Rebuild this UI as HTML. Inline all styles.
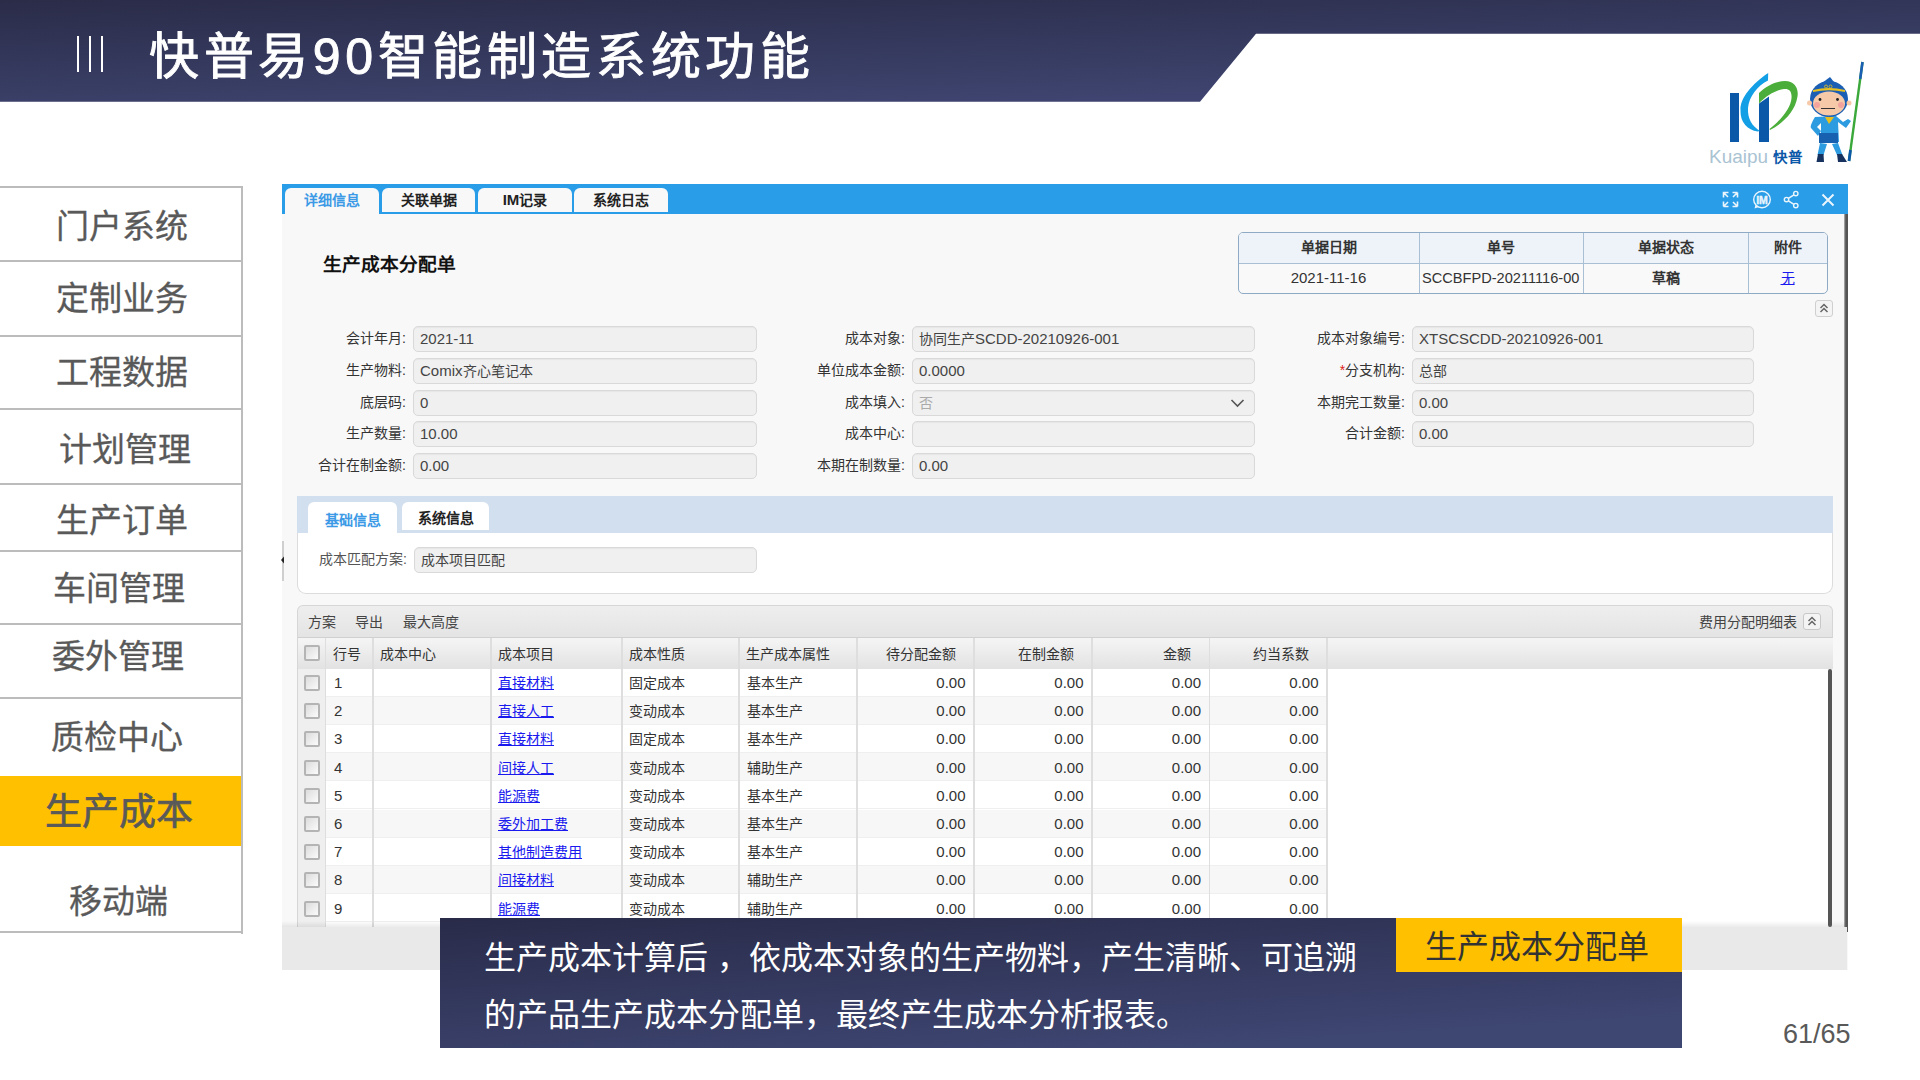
<!DOCTYPE html>
<html lang="zh-CN">
<head>
<meta charset="utf-8">
<style>
*{box-sizing:border-box;margin:0;padding:0}
html,body{width:1920px;height:1080px;overflow:hidden;background:#fff}
body{position:relative;font-family:"Liberation Sans",sans-serif}
.abs{position:absolute}
#hdr{left:0;top:0;width:1920px;height:102px}
.bar{position:absolute;top:36px;width:2px;height:36px;background:#fff}
#title{left:149px;top:25px;color:#fff;font-size:50px;font-weight:400;letter-spacing:4.6px;-webkit-text-stroke:0.9px #fff;line-height:64px;white-space:nowrap}
/* nav */
.nav{position:absolute;left:0;width:243px;border-right:2px solid #bcbcbc;color:#595959;font-size:32px;white-space:nowrap}
.nl{position:absolute;left:0;width:243px;height:2px;background:#bcbcbc}
.nt{position:absolute;line-height:40px;white-space:nowrap;color:#595959;font-size:33px;-webkit-text-stroke:0.3px #595959}
/* screenshot */
.tab{position:absolute;background:#f8f8f8;border-radius:6px 6px 0 0;font-size:14px;font-weight:bold;text-align:center;line-height:24px;color:#222;white-space:nowrap}
.tt{position:absolute;font-size:14px;line-height:18px;text-align:center;white-space:nowrap}
.lab{position:absolute;font-size:14px;line-height:25px;text-align:right;color:#333;white-space:nowrap}
.inp{position:absolute;height:26px;border:1px solid #d9d9d9;border-radius:5px;background:#f0f0f0;font-size:14px;line-height:24px;padding-left:6px;color:#444;white-space:nowrap;box-shadow:inset 0 1px 1px rgba(0,0,0,0.04)}
.tab2{position:absolute;background:#fff;border-radius:6px 6px 0 0;font-size:14px;font-weight:bold;text-align:center;line-height:28px;white-space:nowrap}
.gt{position:absolute;font-size:14px;line-height:18px;color:#444;white-space:nowrap}
.gd{position:absolute;font-size:14px;line-height:16px;color:#333;white-space:nowrap}
.en{font-size:15px}
.lk{color:#1a1aee;text-decoration:underline}
.cb{position:absolute;width:16px;height:16px;border:2px solid #b4b4b4;border-radius:2px;background:linear-gradient(135deg,#dcdcdc,#fbfbfb)}
</style>
</head>
<body>
<svg id="hdr" class="abs" width="1920" height="102" viewBox="0 0 1920 102">
<defs><linearGradient id="hg" x1="0" y1="0" x2="0.5" y2="1"><stop offset="0" stop-color="#2a2c48"/><stop offset="1" stop-color="#3e446f"/></linearGradient></defs>
<polygon points="0,0 1920,0 1920,33.7 1256,33.7 1200,101.7 0,101.7" fill="url(#hg)"/>
</svg>
<div class="bar" style="left:77px"></div>
<div class="bar" style="left:89px"></div>
<div class="bar" style="left:101px"></div>
<div id="title" class="abs">快普易90智能制造系统功能</div>

<!-- LOGO -->
<svg class="abs" style="left:1700px;top:55px" width="170" height="115" viewBox="1700 55 170 115">
<rect x="1730" y="93" width="9" height="49" fill="#0b58a8"/>
<path d="M1759 103.5 L1769 96.5 L1769 142 L1759 142 Z" fill="#0b58a8"/>
<path d="M1768.2 73 C1752 84 1740 98 1740.5 110 C1740 123 1748 130 1757.5 131.5 L1760 131 C1752 126 1747.5 119 1748 108 C1749 97 1757 86 1768 80.5 Z" fill="#129fe6"/>
<path d="M1759 93 C1766 86 1776 81 1785 81 C1795 81 1799 89 1797.4 97 C1795 112 1782 124 1770 130 L1769.5 129 C1780 121 1791 108 1791.5 98 C1792 91 1789 88.5 1784 89 C1776 90 1766 96 1759 103.5 Z" fill="#4cae3a"/>
<text x="1709" y="163" font-family="Liberation Sans" font-size="18.5" fill="#aac3d3" textLength="59" lengthAdjust="spacingAndGlyphs">Kuaipu</text>
<text x="1773" y="162" font-family="Liberation Sans" font-size="14" font-weight="bold" fill="#0b58a8" textLength="29" lengthAdjust="spacingAndGlyphs">快普</text>
<!-- stick -->
<path d="M1862.5 62 L1849 161" stroke="#3aa83a" stroke-width="2.4"/>
<path d="M1862.5 62 L1860.2 79" stroke="#1a5fb4" stroke-width="2.6"/>
<path d="M1850.5 150 L1849 161" stroke="#0b58a8" stroke-width="2.8"/>
<!-- monkey body -->
<path d="M1815 117 C1812 122 1810 126 1811 128 L1818 136 L1821 131 L1817 127 L1821 123 L1821 142 L1839 142 L1838 122 L1846 128 L1851 121 L1848 119 L1843 122 L1836 116 Z" fill="#2d9be0"/>
<rect x="1819" y="133" width="19" height="10" fill="#1860b0"/>
<path d="M1820 143 L1817.5 155 L1823.5 155 L1827 144 Z M1832 144 L1837 155 L1842.5 155 L1838 143 Z" fill="#2d9be0"/>
<path d="M1818 154 L1816.5 162 L1824 162 L1823.5 154 Z M1837 154 L1838 162 L1847 162 L1842 154 Z" fill="#17325e"/>
<!-- head -->
<path d="M1822 83 L1830 77 L1834 82 Z" fill="#1a5fb4"/>
<ellipse cx="1829" cy="99" rx="19" ry="18" fill="#1a5fb4"/>
<circle cx="1809.5" cy="103" r="2.5" fill="#f6c9a9"/>
<circle cx="1849" cy="103" r="2.5" fill="#f6c9a9"/>
<ellipse cx="1829" cy="103.5" rx="16" ry="12" fill="#f6c9a9"/>
<path d="M1813 90 Q1829 86 1845 90 L1845 92 Q1829 88.5 1813 92 Z" fill="#e8c020"/>
<circle cx="1826" cy="86.5" r="1.5" fill="none" stroke="#e8c020" stroke-width="0.8"/>
<circle cx="1830.5" cy="86.5" r="1.5" fill="none" stroke="#e8c020" stroke-width="0.8"/>
<circle cx="1820" cy="99.5" r="1.4" fill="#222"/>
<circle cx="1837.5" cy="99.5" r="1.4" fill="#222"/>
<rect x="1821" y="108" width="14" height="1" fill="#333"/>
<circle cx="1817" cy="105" r="3" fill="#f19a9a" opacity="0.8"/>
<circle cx="1841" cy="105" r="3" fill="#f19a9a" opacity="0.8"/>
<path d="M1825 117 L1829 124 L1834 117 Z" fill="#e8c020"/>
</svg>

<!-- NAV -->
<div class="nl" style="top:186px"></div>
<div class="nl" style="top:260px"></div>
<div class="nl" style="top:335px"></div>
<div class="nl" style="top:408px"></div>
<div class="nl" style="top:483px"></div>
<div class="nl" style="top:550px"></div>
<div class="nl" style="top:623px"></div>
<div class="nl" style="top:697px"></div>
<div class="nl" style="top:931px"></div>
<div class="abs" style="left:241px;top:186px;width:2px;height:748px;background:#bcbcbc"></div>
<div class="abs" style="left:0;top:776px;width:241px;height:70px;background:#ffc000"></div>
<div class="nt" style="left:56px;top:206.5px">门户系统</div>
<div class="nt" style="left:56px;top:278.5px">定制业务</div>
<div class="nt" style="left:56px;top:352.5px">工程数据</div>
<div class="nt" style="left:59px;top:429.5px">计划管理</div>
<div class="nt" style="left:56px;top:500.5px">生产订单</div>
<div class="nt" style="left:53px;top:568.5px">车间管理</div>
<div class="nt" style="left:52px;top:636.5px">委外管理</div>
<div class="nt" style="left:51px;top:717.5px">质检中心</div>
<div class="nt" style="left:45px;top:793px;font-size:37px;-webkit-text-stroke:0.7px #595959">生产成本</div>
<div class="nt" style="left:69px;top:881.5px">移动端</div>

<div class="abs" style="left:282px;top:184px;width:1566px;height:786px;background:#f8f8f8"></div>
<div class="abs" style="left:282px;top:184px;width:1566px;height:30px;background:#2a9de8"></div>
<div class="tab" style="left:285px;top:188px;width:94px;height:26px;color:#3d9ae6">详细信息</div>
<div class="tab" style="left:382px;top:188px;width:93px;height:24px">关联单据</div>
<div class="tab" style="left:478px;top:188px;width:94px;height:24px"><span class="en">IM</span>记录</div>
<div class="tab" style="left:574px;top:188px;width:94px;height:24px">系统日志</div>
<div class="abs" style="left:1844px;top:214px;width:4px;height:718px;background:linear-gradient(90deg,#bbb,#555 45%,#555)"></div>
<div class="abs" style="left:282px;top:927px;width:1565px;height:43px;background:#e9e9e9"></div>
<div class="abs" style="left:323px;top:251.5px;font-size:18.7px;font-weight:bold;color:#111;line-height:26px;white-space:nowrap">生产成本分配单</div>
<div class="abs" style="left:1238px;top:232px;width:590px;height:62px;border:1px solid #8eaac4;border-radius:5px;background:#f9f9f9;overflow:hidden"><div class="abs" style="left:0;top:0;width:590px;height:31px;background:#eef3f9;border-bottom:1px solid #a9bfd3"></div><div class="abs" style="left:180px;top:0;width:1px;height:62px;background:#a9bfd3"></div><div class="abs" style="left:344px;top:0;width:1px;height:62px;background:#a9bfd3"></div><div class="abs" style="left:509px;top:0;width:1px;height:62px;background:#a9bfd3"></div></div>
<div class="tt" style="left:1238px;top:238px;width:181px;font-weight:bold;color:#333">单据日期</div>
<div class="tt" style="left:1238px;top:269px;width:181px;color:#333"><span class="en">2021-11-16</span></div>
<div class="tt" style="left:1419px;top:238px;width:164px;font-weight:bold;color:#333">单号</div>
<div class="tt" style="left:1422px;top:269px;width:160px;color:#333;text-align:left;overflow:hidden;font-size:14.6px">SCCBFPD-20211116-00</div>
<div class="tt" style="left:1583px;top:238px;width:165px;font-weight:bold;color:#333">单据状态</div>
<div class="tt" style="left:1583px;top:269px;width:165px;color:#333;font-weight:bold">草稿</div>
<div class="tt" style="left:1748px;top:238px;width:79px;font-weight:bold;color:#333">附件</div>
<div class="tt" style="left:1748px;top:269px;width:79px;color:#1a1aee;text-decoration:underline">无</div>
<div class="abs" style="left:1815px;top:300px;width:18px;height:17px;border:1px solid #cfcfcf;border-radius:3px;background:#f4f4f4"></div>
<svg class="abs" style="left:1815px;top:300px" width="18" height="17"><path d="M5.5 8 L9 4.5 L12.5 8 M5.5 12 L9 8.5 L12.5 12" stroke="#666" stroke-width="1.5" fill="none"/></svg>
<div class="lab" style="left:206px;top:326px;width:200px">会计年月:</div>
<div class="inp" style="left:413px;top:326px;width:344px"><span class="en">2021-11</span></div>
<div class="lab" style="left:206px;top:358px;width:200px">生产物料:</div>
<div class="inp" style="left:413px;top:358px;width:344px"><span class="en">Comix</span>齐心笔记本</div>
<div class="lab" style="left:206px;top:390px;width:200px">底层码:</div>
<div class="inp" style="left:413px;top:390px;width:344px"><span class="en">0</span></div>
<div class="lab" style="left:206px;top:421px;width:200px">生产数量:</div>
<div class="inp" style="left:413px;top:421px;width:344px"><span class="en">10.00</span></div>
<div class="lab" style="left:206px;top:453px;width:200px">合计在制金额:</div>
<div class="inp" style="left:413px;top:453px;width:344px"><span class="en">0.00</span></div>
<div class="lab" style="left:705px;top:326px;width:200px">成本对象:</div>
<div class="inp" style="left:912px;top:326px;width:343px">协同生产<span class="en">SCDD-20210926-001</span></div>
<div class="lab" style="left:705px;top:358px;width:200px">单位成本金额:</div>
<div class="inp" style="left:912px;top:358px;width:343px"><span class="en">0.0000</span></div>
<div class="lab" style="left:705px;top:390px;width:200px">成本填入:</div>
<div class="inp" style="left:912px;top:390px;width:343px"><span style="color:#aaa">否</span><svg class="abs" style="right:9px;top:7px" width="15" height="10"><path d="M1.5 2 L7.5 8 L13.5 2" stroke="#555" stroke-width="1.6" fill="none"/></svg></div>
<div class="lab" style="left:705px;top:421px;width:200px">成本中心:</div>
<div class="inp" style="left:912px;top:421px;width:343px"></div>
<div class="lab" style="left:705px;top:453px;width:200px">本期在制数量:</div>
<div class="inp" style="left:912px;top:453px;width:343px"><span class="en">0.00</span></div>
<div class="lab" style="left:1205px;top:326px;width:200px">成本对象编号:</div>
<div class="inp" style="left:1412px;top:326px;width:342px"><span class="en">XTSCSCDD-20210926-001</span></div>
<div class="lab" style="left:1205px;top:358px;width:200px"><span style="color:#e02020">*</span>分支机构:</div>
<div class="inp" style="left:1412px;top:358px;width:342px">总部</div>
<div class="lab" style="left:1205px;top:390px;width:200px">本期完工数量:</div>
<div class="inp" style="left:1412px;top:390px;width:342px"><span class="en">0.00</span></div>
<div class="lab" style="left:1205px;top:421px;width:200px">合计金额:</div>
<div class="inp" style="left:1412px;top:421px;width:342px"><span class="en">0.00</span></div>
<div class="abs" style="left:297px;top:496px;width:1536px;height:98px;border:1px solid #dcdcdc;border-top:none;border-radius:0 0 9px 9px;background:#fff"></div>
<div class="abs" style="left:297px;top:496px;width:1536px;height:37px;background:#d1dfee"></div>
<div class="tab2" style="left:308px;top:502px;width:89px;height:31px;color:#3d9ae6;padding-top:4px">基础信息</div>
<div class="tab2" style="left:402px;top:502px;width:87px;height:28px;color:#222;padding-top:2px">系统信息</div>
<div class="lab" style="left:207px;top:547px;width:200px;color:#555">成本匹配方案:</div>
<div class="inp" style="left:414px;top:547px;width:343px">成本项目匹配</div>
<div class="abs" style="left:282px;top:541px;width:2px;height:40px;background:#cfcfcf"></div>
<svg class="abs" style="left:281px;top:555px" width="4" height="10"><path d="M0 5 L3 1.5 L3 8.5Z" fill="#222"/></svg>
<div class="abs" style="left:297px;top:605px;width:1536px;height:33px;border:1px solid #d6d6d6;border-bottom:1px solid #d0d0d0;border-radius:6px 6px 0 0;background:linear-gradient(#eeeeee,#e4e4e4)"></div>
<div class="gt" style="left:308px;top:613px">方案</div>
<div class="gt" style="left:355px;top:613px">导出</div>
<div class="gt" style="left:403px;top:613px">最大高度</div>
<div class="gt" style="left:1699px;top:613px">费用分配明细表</div>
<div class="abs" style="left:1803px;top:613px;width:18px;height:17px;border:1px solid #c8c8c8;border-radius:3px;background:#f4f4f4"></div>
<svg class="abs" style="left:1803px;top:613px" width="18" height="17"><path d="M5.5 8 L9 4.5 L12.5 8 M5.5 12 L9 8.5 L12.5 12" stroke="#666" stroke-width="1.5" fill="none"/></svg>
<div class="abs" style="left:297px;top:638px;width:1536px;height:31px;background:linear-gradient(#f5f5f5,#e2e2e2);border-left:1px solid #d6d6d6"></div>
<div class="abs" style="left:297px;top:668.5px;width:1532px;height:258.5px;background:#fff;overflow:hidden">
<div class="abs" style="left:28px;top:0.0px;width:1001px;height:28.2px;background:#fff;border-bottom:1px solid #efefef"></div>
<div class="abs" style="left:28px;top:28.2px;width:1001px;height:28.2px;background:#f7f7f7;border-bottom:1px solid #efefef"></div>
<div class="abs" style="left:28px;top:56.4px;width:1001px;height:28.2px;background:#fff;border-bottom:1px solid #efefef"></div>
<div class="abs" style="left:28px;top:84.6px;width:1001px;height:28.2px;background:#f7f7f7;border-bottom:1px solid #efefef"></div>
<div class="abs" style="left:28px;top:112.8px;width:1001px;height:28.2px;background:#fff;border-bottom:1px solid #efefef"></div>
<div class="abs" style="left:28px;top:141.0px;width:1001px;height:28.2px;background:#f7f7f7;border-bottom:1px solid #efefef"></div>
<div class="abs" style="left:28px;top:169.2px;width:1001px;height:28.2px;background:#fff;border-bottom:1px solid #efefef"></div>
<div class="abs" style="left:28px;top:197.4px;width:1001px;height:28.2px;background:#f7f7f7;border-bottom:1px solid #efefef"></div>
<div class="abs" style="left:28px;top:225.6px;width:1001px;height:28.2px;background:#fff;border-bottom:1px solid #efefef"></div>
</div>
<div class="abs" style="left:297px;top:668.5px;width:28px;height:258.5px;background:#efefef;border-left:1px solid #d6d6d6"></div>
<div class="abs" style="left:324.5px;top:638px;width:1.5px;height:289px;background:#dedede"></div>
<div class="abs" style="left:372.0px;top:638px;width:1.5px;height:289px;background:#dedede"></div>
<div class="abs" style="left:490.0px;top:638px;width:1.5px;height:289px;background:#dedede"></div>
<div class="abs" style="left:621.0px;top:638px;width:1.5px;height:289px;background:#dedede"></div>
<div class="abs" style="left:738.0px;top:638px;width:1.5px;height:289px;background:#dedede"></div>
<div class="abs" style="left:856.0px;top:638px;width:1.5px;height:289px;background:#dedede"></div>
<div class="abs" style="left:973.0px;top:638px;width:1.5px;height:289px;background:#dedede"></div>
<div class="abs" style="left:1091.0px;top:638px;width:1.5px;height:289px;background:#dedede"></div>
<div class="abs" style="left:1208.5px;top:638px;width:1.5px;height:289px;background:#dedede"></div>
<div class="abs" style="left:1326.0px;top:638px;width:1.5px;height:289px;background:#dedede"></div>
<div class="gt" style="left:332.5px;top:645px;color:#333">行号</div>
<div class="gt" style="left:379.5px;top:645px;color:#333">成本中心</div>
<div class="gt" style="left:497.5px;top:645px;color:#333">成本项目</div>
<div class="gt" style="left:628.5px;top:645px;color:#333">成本性质</div>
<div class="gt" style="left:745.5px;top:645px;color:#333">生产成本属性</div>
<div class="gt" style="left:856.5px;top:645px;width:99.0px;text-align:right;color:#333">待分配金额</div>
<div class="gt" style="left:973.5px;top:645px;width:100.0px;text-align:right;color:#333">在制金额</div>
<div class="gt" style="left:1091.5px;top:645px;width:99.5px;text-align:right;color:#333">金额</div>
<div class="gt" style="left:1209px;top:645px;width:99.5px;text-align:right;color:#333">约当系数</div>
<div class="cb" style="left:304px;top:645px"></div>
<div class="cb" style="left:304px;top:675px"></div>
<div class="gd" style="left:334px;top:675.0px"><span class="en">1</span></div>
<div class="gd lk" style="left:498px;top:675.0px">直接材料</div>
<div class="gd" style="left:629px;top:675.0px">固定成本</div>
<div class="gd" style="left:747px;top:675.0px">基本生产</div>
<div class="gd" style="left:856.5px;top:675.0px;width:109.0px;text-align:right"><span class="en">0.00</span></div>
<div class="gd" style="left:973.5px;top:675.0px;width:110.0px;text-align:right"><span class="en">0.00</span></div>
<div class="gd" style="left:1091.5px;top:675.0px;width:109.5px;text-align:right"><span class="en">0.00</span></div>
<div class="gd" style="left:1209px;top:675.0px;width:109.5px;text-align:right"><span class="en">0.00</span></div>
<div class="cb" style="left:304px;top:703px"></div>
<div class="gd" style="left:334px;top:703.2px"><span class="en">2</span></div>
<div class="gd lk" style="left:498px;top:703.2px">直接人工</div>
<div class="gd" style="left:629px;top:703.2px">变动成本</div>
<div class="gd" style="left:747px;top:703.2px">基本生产</div>
<div class="gd" style="left:856.5px;top:703.2px;width:109.0px;text-align:right"><span class="en">0.00</span></div>
<div class="gd" style="left:973.5px;top:703.2px;width:110.0px;text-align:right"><span class="en">0.00</span></div>
<div class="gd" style="left:1091.5px;top:703.2px;width:109.5px;text-align:right"><span class="en">0.00</span></div>
<div class="gd" style="left:1209px;top:703.2px;width:109.5px;text-align:right"><span class="en">0.00</span></div>
<div class="cb" style="left:304px;top:731px"></div>
<div class="gd" style="left:334px;top:731.4px"><span class="en">3</span></div>
<div class="gd lk" style="left:498px;top:731.4px">直接材料</div>
<div class="gd" style="left:629px;top:731.4px">固定成本</div>
<div class="gd" style="left:747px;top:731.4px">基本生产</div>
<div class="gd" style="left:856.5px;top:731.4px;width:109.0px;text-align:right"><span class="en">0.00</span></div>
<div class="gd" style="left:973.5px;top:731.4px;width:110.0px;text-align:right"><span class="en">0.00</span></div>
<div class="gd" style="left:1091.5px;top:731.4px;width:109.5px;text-align:right"><span class="en">0.00</span></div>
<div class="gd" style="left:1209px;top:731.4px;width:109.5px;text-align:right"><span class="en">0.00</span></div>
<div class="cb" style="left:304px;top:760px"></div>
<div class="gd" style="left:334px;top:759.6px"><span class="en">4</span></div>
<div class="gd lk" style="left:498px;top:759.6px">间接人工</div>
<div class="gd" style="left:629px;top:759.6px">变动成本</div>
<div class="gd" style="left:747px;top:759.6px">辅助生产</div>
<div class="gd" style="left:856.5px;top:759.6px;width:109.0px;text-align:right"><span class="en">0.00</span></div>
<div class="gd" style="left:973.5px;top:759.6px;width:110.0px;text-align:right"><span class="en">0.00</span></div>
<div class="gd" style="left:1091.5px;top:759.6px;width:109.5px;text-align:right"><span class="en">0.00</span></div>
<div class="gd" style="left:1209px;top:759.6px;width:109.5px;text-align:right"><span class="en">0.00</span></div>
<div class="cb" style="left:304px;top:788px"></div>
<div class="gd" style="left:334px;top:787.8px"><span class="en">5</span></div>
<div class="gd lk" style="left:498px;top:787.8px">能源费</div>
<div class="gd" style="left:629px;top:787.8px">变动成本</div>
<div class="gd" style="left:747px;top:787.8px">基本生产</div>
<div class="gd" style="left:856.5px;top:787.8px;width:109.0px;text-align:right"><span class="en">0.00</span></div>
<div class="gd" style="left:973.5px;top:787.8px;width:110.0px;text-align:right"><span class="en">0.00</span></div>
<div class="gd" style="left:1091.5px;top:787.8px;width:109.5px;text-align:right"><span class="en">0.00</span></div>
<div class="gd" style="left:1209px;top:787.8px;width:109.5px;text-align:right"><span class="en">0.00</span></div>
<div class="cb" style="left:304px;top:816px"></div>
<div class="gd" style="left:334px;top:816.0px"><span class="en">6</span></div>
<div class="gd lk" style="left:498px;top:816.0px">委外加工费</div>
<div class="gd" style="left:629px;top:816.0px">变动成本</div>
<div class="gd" style="left:747px;top:816.0px">基本生产</div>
<div class="gd" style="left:856.5px;top:816.0px;width:109.0px;text-align:right"><span class="en">0.00</span></div>
<div class="gd" style="left:973.5px;top:816.0px;width:110.0px;text-align:right"><span class="en">0.00</span></div>
<div class="gd" style="left:1091.5px;top:816.0px;width:109.5px;text-align:right"><span class="en">0.00</span></div>
<div class="gd" style="left:1209px;top:816.0px;width:109.5px;text-align:right"><span class="en">0.00</span></div>
<div class="cb" style="left:304px;top:844px"></div>
<div class="gd" style="left:334px;top:844.2px"><span class="en">7</span></div>
<div class="gd lk" style="left:498px;top:844.2px">其他制造费用</div>
<div class="gd" style="left:629px;top:844.2px">变动成本</div>
<div class="gd" style="left:747px;top:844.2px">基本生产</div>
<div class="gd" style="left:856.5px;top:844.2px;width:109.0px;text-align:right"><span class="en">0.00</span></div>
<div class="gd" style="left:973.5px;top:844.2px;width:110.0px;text-align:right"><span class="en">0.00</span></div>
<div class="gd" style="left:1091.5px;top:844.2px;width:109.5px;text-align:right"><span class="en">0.00</span></div>
<div class="gd" style="left:1209px;top:844.2px;width:109.5px;text-align:right"><span class="en">0.00</span></div>
<div class="cb" style="left:304px;top:872px"></div>
<div class="gd" style="left:334px;top:872.4px"><span class="en">8</span></div>
<div class="gd lk" style="left:498px;top:872.4px">间接材料</div>
<div class="gd" style="left:629px;top:872.4px">变动成本</div>
<div class="gd" style="left:747px;top:872.4px">辅助生产</div>
<div class="gd" style="left:856.5px;top:872.4px;width:109.0px;text-align:right"><span class="en">0.00</span></div>
<div class="gd" style="left:973.5px;top:872.4px;width:110.0px;text-align:right"><span class="en">0.00</span></div>
<div class="gd" style="left:1091.5px;top:872.4px;width:109.5px;text-align:right"><span class="en">0.00</span></div>
<div class="gd" style="left:1209px;top:872.4px;width:109.5px;text-align:right"><span class="en">0.00</span></div>
<div class="cb" style="left:304px;top:901px"></div>
<div class="gd" style="left:334px;top:900.6px"><span class="en">9</span></div>
<div class="gd lk" style="left:498px;top:900.6px">能源费</div>
<div class="gd" style="left:629px;top:900.6px">变动成本</div>
<div class="gd" style="left:747px;top:900.6px">辅助生产</div>
<div class="gd" style="left:856.5px;top:900.6px;width:109.0px;text-align:right"><span class="en">0.00</span></div>
<div class="gd" style="left:973.5px;top:900.6px;width:110.0px;text-align:right"><span class="en">0.00</span></div>
<div class="gd" style="left:1091.5px;top:900.6px;width:109.5px;text-align:right"><span class="en">0.00</span></div>
<div class="gd" style="left:1209px;top:900.6px;width:109.5px;text-align:right"><span class="en">0.00</span></div>
<div class="abs" style="left:282px;top:921px;width:1563px;height:6px;background:linear-gradient(rgba(0,0,0,0),rgba(0,0,0,0.08))"></div>
<div class="abs" style="left:1828px;top:669px;width:4px;height:258px;background:#555;border-radius:2px"></div>
<svg class="abs" style="left:1718px;top:186px;opacity:0.9" width="125" height="26" viewBox="0 0 125 26">
<g stroke="#fff" stroke-width="1.6" fill="none">
<path d="M5.5 7 V6.5 H10.5 M5.5 6.5 V11.5 M5.8 6.8 L10 11"/>
<path d="M19.5 6.5 H14.5 M19.5 6.5 V11.5 M19.2 6.8 L15 11"/>
<path d="M5.5 20.5 H10.5 M5.5 20.5 V15.5 M5.8 20.2 L10 16"/>
<path d="M19.5 20.5 H14.5 M19.5 20.5 V15.5 M19.2 20.2 L15 16"/>
<circle cx="44" cy="13.5" r="8.3" stroke-width="1.4"/>
<circle cx="77.8" cy="7.6" r="2.2" stroke-width="1.4"/><circle cx="77.8" cy="19.6" r="2.2" stroke-width="1.4"/><circle cx="68.5" cy="13.6" r="2.2" stroke-width="1.4"/>
<path d="M70.4 12.4 L75.9 8.9 M70.4 14.8 L75.9 18.3"/>
<path d="M104.5 8.5 L115.5 19.5 M115.5 8.5 L104.5 19.5" stroke-width="2"/>
</g>
<path d="M37.5 19 L36.5 22.5 L41 21" fill="#fff"/>
<text x="44" y="17.5" font-size="10.5" font-weight="bold" stroke="#fff" stroke-width="0.4" fill="#fff" text-anchor="middle" font-family="Liberation Sans">IM</text>
</svg>


<!-- OVERLAY -->
<svg class="abs" style="left:440px;top:918px" width="1242" height="130">
<defs><linearGradient id="og" x1="0" y1="0" x2="0.6" y2="1"><stop offset="0" stop-color="#292b49"/><stop offset="1" stop-color="#3e4672"/></linearGradient></defs>
<rect width="1242" height="130" fill="url(#og)"/></svg>
<div class="abs" style="left:1396px;top:918px;width:286px;height:54px;background:#ffc000"></div>
<div class="abs" style="left:1425px;top:925px;font-size:32px;line-height:44px;color:#333;white-space:nowrap">生产成本分配单</div>
<div class="abs" style="left:484px;top:936px;font-size:32px;line-height:44px;color:#fff;white-space:nowrap">生产成本计算后 ，依成本对象的生产物料，产生清晰、可追溯</div>
<div class="abs" style="left:484px;top:993px;font-size:32px;line-height:44px;color:#fff;white-space:nowrap">的产品生产成本分配单，最终产生成本分析报表。</div>
<div class="abs" style="left:1783px;top:1018.5px;font-size:27px;line-height:30px;color:#595959;white-space:nowrap">61/65</div>
</body>
</html>
